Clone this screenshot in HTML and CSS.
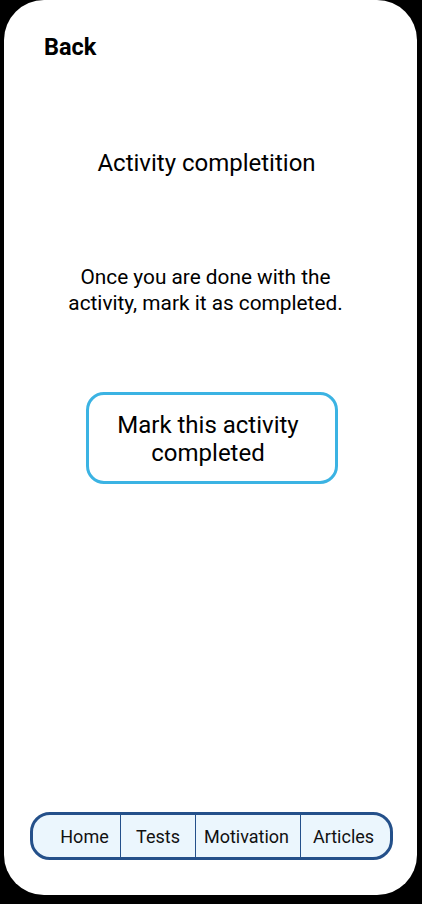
FILE: index.html
```html
<!DOCTYPE html>
<html>
<head>
<meta charset="utf-8">
<link rel="stylesheet" href="styles.css">
</head>
<body>
<div class="screen">
  <div class="back">Back</div>
  <h1 class="title">Activity completition</h1>
  <p class="info">Once you are done with the<br>activity, mark it as completed.</p>
  <button class="mark">Mark this activity<br>completed</button>
  <nav class="nav">
    <div class="tab tab-home">Home</div>
    <div class="tab tab-tests">Tests</div>
    <div class="tab tab-motivation">Motivation</div>
    <div class="tab tab-articles">Articles</div>
  </nav>
</div>
</body>
</html>
```
FILE: styles.css
```css
html, body {
  margin: 0;
  padding: 0;
  background: #000;
}
body {
  font-family: Roboto, "Liberation Sans", sans-serif;
  color: #000;
}
.screen {
  box-sizing: border-box;
  width: 413px;
  height: 895px;
  margin-left: 4px;
  background: #fff;
  border-radius: 40px;
  display: flex;
  flex-direction: column;
  padding: 33px 0 35px;
}
.back {
  padding-left: 40px;
  font-size: 23.5px;
  font-weight: 700;
  line-height: 28px;
}
.title {
  margin: 88px 0 0;
  text-align: center;
  font-size: 24px;
  font-weight: 400;
  line-height: 28px;
  padding-right: 8px;
}
.info {
  margin: 87px 0 0;
  text-align: center;
  font-size: 20.8px;
  line-height: 26px;
  padding-right: 10px;
}
.mark {
  align-self: center;
  margin: 76px 0 0 2px;
  box-sizing: border-box;
  width: 252px;
  height: 92px;
  border: 3px solid #3bb3e3;
  border-radius: 18px;
  background: #fff;
  font-family: Roboto, "Liberation Sans", sans-serif;
  font-size: 24px;
  line-height: 28px;
  color: #000;
  padding: 2px 7px 0 0;
}
.nav {
  margin: auto 0 0 26px;
  box-sizing: border-box;
  width: 363px;
  height: 48px;
  border: 3px solid #24508a;
  border-radius: 20px;
  background: #ebf6fd;
  display: flex;
  overflow: hidden;
}
.tab {
  display: flex;
  align-items: center;
  justify-content: center;
  font-size: 18px;
  color: #111;
  border-right: 1px solid #24508a;
}
.tab-home { width: 88px; padding-left: 16px; box-sizing: border-box; }
.tab-tests { width: 74px; }
.tab-motivation { width: 105px; padding-right: 3px; box-sizing: border-box; }
.tab-articles { flex: 1; border-right: none; padding-right: 4px; }
```
